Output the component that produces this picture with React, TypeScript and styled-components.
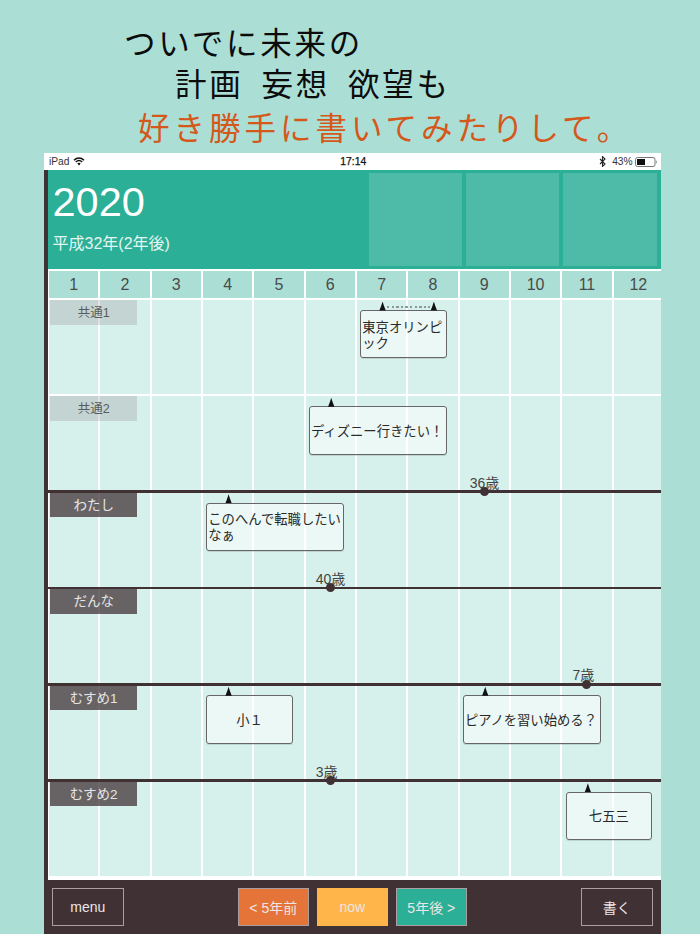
import React from "react";
import styled, { createGlobalStyle } from "styled-components";

const SANS = `"Liberation Sans", "Noto Sans CJK JP", sans-serif`;
const COL = 51.333;

const Global = createGlobalStyle`
  html, body { margin: 0; padding: 0; }
  body { background: #abdfd6; font-family: ${SANS}; width: 700px; height: 934px; overflow: hidden; }
  * { box-sizing: border-box; }
`;

const Page = styled.div`
  width: 700px;
  height: 934px;
  overflow: hidden;
  display: flex;
  flex-direction: column;
`;

const Hero = styled.div`
  height: 153px;
  padding-top: 21px;
  font-family: "Noto Sans CJK JP", sans-serif;
  font-size: 31.5px;
  letter-spacing: 2.8px;
  word-spacing: 8px;
`;

const HeroLine = styled.div<{ $indent: number; $accent?: boolean; $top?: number }>`
  height: 41px;
  line-height: 41px;
  padding-left: ${(p) => p.$indent}px;
  margin-top: ${(p) => p.$top ?? 0}px;
  color: ${(p) => (p.$accent ? "#d4581a" : "#0c0c0c")};
  letter-spacing: ${(p) => (p.$accent ? 4 : 2.8)}px;
  white-space: pre;
`;

const Device = styled.div`
  margin-left: 44px;
  width: 616.6px;
  flex: 1;
  display: flex;
  flex-direction: column;
  min-height: 0;
`;

const StatusBar = styled.div`
  height: 17px;
  background: #fff;
  display: grid;
  grid-template-columns: 1fr auto 1fr;
  align-items: center;
  padding: 0 3px 0 5px;
  font-size: 10.2px;
  color: #333;
`;

const StatusLeft = styled.div`
  display: flex;
  align-items: center;
  gap: 4px;
`;

const StatusTime = styled.div`
  color: #111;
  font-size: 10.4px;
  -webkit-text-stroke: 0.25px #111;
`;

const StatusRight = styled.div`
  display: flex;
  align-items: center;
  justify-content: flex-end;
  gap: 2px;
`;

const BluetoothSlot = styled.span`
  display: flex;
  margin-right: 4px;
`;

const Body = styled.div`
  flex: 1;
  min-height: 0;
  display: flex;
  flex-direction: column;
  border-left: 4px solid #403135;
  background: #fff;
  overflow: hidden;
`;

const YearHeader = styled.div`
  height: 99px;
  flex: none;
  background: #2baf96;
  display: flex;
  justify-content: space-between;
  padding: 3px 4px 3px 4.5px;
  margin-bottom: 2px;
`;

const YearInfo = styled.div`
  color: #fff;
  display: flex;
  flex-direction: column;
`;

const YearTitle = styled.div`
  font-size: 41.5px;
  line-height: 47px;
  margin-top: 5px;
`;

const YearSub = styled.div`
  font-size: 16px;
  line-height: 20px;
  margin-top: 9px;
  color: #e4f5f1;
`;

const PhotoSlots = styled.div`
  display: flex;
  gap: 4px;
`;

const PhotoSlot = styled.div`
  width: 93.2px;
  height: 93px;
  background: #4dbba7;
`;

const Board = styled.div`
  flex: none;
  width: 616px;
`;

const MonthGrid = styled.div`
  display: grid;
  grid-template-columns: repeat(12, ${COL}px);
  height: 27.5px;
`;

const Month = styled.div`
  background: #abdfd6;
  border-left: 1px solid #fff;
  border-right: 1px solid #fff;
  display: flex;
  align-items: center;
  justify-content: center;
  font-size: 16px;
  color: #4a4a4a;
`;

const Row = styled.div`
  position: relative;
  height: 96.333px;
  display: grid;
  grid-template-columns: repeat(12, ${COL}px);
  grid-template-rows: 96.333px;
`;

const RowLine = styled.div<{ $person?: boolean }>`
  position: absolute;
  left: 0;
  right: 0;
  top: ${(p) => (p.$person ? -0.8 : -1)}px;
  height: ${(p) => (p.$person ? 2.6 : 2)}px;
  background: ${(p) => (p.$person ? "#403135" : "#fff")};
`;

const Cell = styled.div<{ $col: number }>`
  grid-row: 1;
  grid-column: ${(p) => p.$col};
  background: #d6f1eb;
  border-left: 1px solid #fff;
  border-right: 1px solid #fff;
`;

const RowLabel = styled.div<{ $person?: boolean }>`
  grid-row: 1;
  grid-column: 1 / span 2;
  justify-self: start;
  align-self: start;
  position: relative;
  width: 86.7px;
  height: 24.7px;
  margin: 1.5px 0 0 2.3px;
  padding-bottom: 2px;
  display: flex;
  align-items: center;
  justify-content: center;
  font-size: ${(p) => (p.$person ? 13.5 : 12.5)}px;
  color: ${(p) => (p.$person ? "#e6e6e6" : "#5a5a5a")};
  background: ${(p) => (p.$person ? "rgba(64, 49, 53, 0.74)" : "rgba(120, 100, 110, 0.2)")};
`;

const Bubble = styled.div<{ $col: number; $span: number; $width: number; $center?: boolean }>`
  grid-row: 1;
  grid-column: ${(p) => p.$col} / span ${(p) => p.$span};
  justify-self: start;
  align-self: start;
  position: relative;
  width: ${(p) => p.$width}px;
  height: 48.3px;
  margin: 11.5px 0 0 4.3px;
  padding: 3px 1px 0;
  display: flex;
  align-items: center;
  justify-content: ${(p) => (p.$center ? "center" : "flex-start")};
  font-size: 13.33px;
  line-height: 16px;
  color: #2a2a2a;
  line-break: anywhere;
  background: rgba(255, 255, 255, 0.52);
  border: 1px solid #666;
  border-radius: 3px;
  box-shadow: 0 1px 0 rgba(0, 0, 0, 0.12);
`;

const Arrow = styled.span<{ $at: number }>`
  position: absolute;
  left: ${(p) => p.$at - 4}px;
  top: -9.5px;
  width: 8px;
  height: 9px;
  background: #111;
  clip-path: polygon(50% 0, 68% 50%, 90% 100%, 10% 100%, 32% 50%);
`;

const SpanDots = styled.span<{ $at: number; $width: number }>`
  position: absolute;
  left: ${(p) => p.$at}px;
  top: -5px;
  width: ${(p) => p.$width}px;
  height: 2px;
  background: repeating-linear-gradient(90deg, #8d9a98 0 2.4px, transparent 2.4px 4.6px);
`;

const AgeMark = styled.div<{ $col: number }>`
  grid-row: 1;
  grid-column: ${(p) => p.$col};
  justify-self: center;
  align-self: start;
  position: relative;
  width: 0;
  height: 0;
`;

const AgeDot = styled.span`
  position: absolute;
  left: -4.5px;
  top: -4px;
  width: 9px;
  height: 9px;
  border-radius: 50%;
  background: #403135;
`;

const AgeText = styled.span`
  position: absolute;
  left: -14.5px;
  top: -16.5px;
  font-size: 14px;
  line-height: 16px;
  color: #444;
  white-space: nowrap;
`;

const Spacer = styled.div`
  height: 4px;
  flex: none;
`;

const Footer = styled.div`
  margin-left: -4px;
  flex: 1;
  background: #403135;
  display: flex;
  align-items: flex-start;
  justify-content: space-between;
  padding: 8px 8px 0;
`;

const NavGroup = styled.div`
  display: flex;
  gap: 7.5px;
`;

const FootButton = styled.button<{ $bg?: string; $plain?: boolean }>`
  width: 71.5px;
  height: 38px;
  padding: 0;
  background: ${(p) => p.$bg ?? "transparent"};
  border: ${(p) => (p.$plain ? "0" : "1px solid #a99fa0")};
  border-radius: 0;
  color: #ebe6e6;
  font-family: ${SANS};
  font-size: 14px;
`;

const Wifi = () => (
  <svg width="12" height="9" viewBox="0 0 12 9" aria-hidden="true">
    <path d="M1 3.2C4 .4 8 .4 11 3.2" fill="none" stroke="#111" strokeWidth="1.5" />
    <path d="M2.8 5C4.7 3.3 7.3 3.3 9.2 5" fill="none" stroke="#111" strokeWidth="1.5" />
    <path d="M4.3 6.4C5.4 5.6 6.6 5.6 7.7 6.4L6 8.6Z" fill="#111" />
  </svg>
);

const Bluetooth = () => (
  <svg width="7" height="11" viewBox="0 0 7 11" aria-hidden="true">
    <path d="M1 3l5 5-2.5 2.4V.6L6 3 1 8" fill="none" stroke="#222" strokeWidth="1.1" />
  </svg>
);

const Battery = () => (
  <svg width="23" height="10" viewBox="0 0 23 10" aria-hidden="true">
    <rect x="0.5" y="0.5" width="19.5" height="9" rx="2" fill="none" stroke="#777" />
    <rect x="2" y="2" width="8" height="6" fill="#111" />
    <path d="M21 3.5c1 .3 1 2.7 0 3z" fill="#777" />
  </svg>
);

type Ev = {
  col: number;
  span: number;
  width: number;
  text: string;
  center?: boolean;
  arrows?: number[];
  dots?: boolean;
};

type RowData = {
  label: string;
  person?: boolean;
  age?: { col: number; text: string };
  events: Ev[];
};

const rows: RowData[] = [
  { label: "共通1", events: [{ col: 7, span: 2, width: 86.5, text: "東京オリンピック", arrows: [21.3, 72.6], dots: true }] },
  { label: "共通2", events: [{ col: 6, span: 3, width: 137.8, text: "ディズニー行きたい！" }] },
  { label: "わたし", person: true, age: { col: 9, text: "36歳" }, events: [{ col: 4, span: 3, width: 137.8, text: "このへんで転職したいなぁ" }] },
  { label: "だんな", person: true, age: { col: 6, text: "40歳" }, events: [] },
  {
    label: "むすめ1",
    person: true,
    age: { col: 11, text: "7歳" },
    events: [
      { col: 4, span: 2, width: 86.5, text: "小１", center: true },
      { col: 9, span: 3, width: 137.8, text: "ピアノを習い始める？" },
    ],
  },
  { label: "むすめ2", person: true, age: { col: 6, text: "3歳" }, events: [{ col: 11, span: 2, width: 86.5, text: "七五三", center: true }] },
];

const months = Array.from({ length: 12 }, (_, i) => i + 1);

export default function App() {
  return (
    <Page>
      <Global />
      <Hero>
        <HeroLine $indent={124}>ついでに未来の</HeroLine>
        <HeroLine $indent={175}>計画 妄想 欲望も</HeroLine>
        <HeroLine $indent={138} $accent $top={3}>好き勝手に書いてみたりして。</HeroLine>
      </Hero>
      <Device>
        <StatusBar>
          <StatusLeft>iPad <Wifi /></StatusLeft>
          <StatusTime>17:14</StatusTime>
          <StatusRight><BluetoothSlot><Bluetooth /></BluetoothSlot> 43% <Battery /></StatusRight>
        </StatusBar>
        <Body>
          <YearHeader>
            <YearInfo>
              <YearTitle>2020</YearTitle>
              <YearSub>平成32年(2年後)</YearSub>
            </YearInfo>
            <PhotoSlots>
              <PhotoSlot />
              <PhotoSlot />
              <PhotoSlot />
            </PhotoSlots>
          </YearHeader>
          <Board>
            <MonthGrid>
              {months.map((m) => <Month key={m}>{m}</Month>)}
            </MonthGrid>
            {rows.map((r) => (
              <Row key={r.label}>
                {months.map((m) => <Cell key={m} $col={m} />)}
                <RowLine $person={r.person} />
                <RowLabel $person={r.person}>{r.label}</RowLabel>
                {r.events.map((e) => (
                  <Bubble key={e.text} $col={e.col} $span={e.span} $width={e.width} $center={e.center}>
                    {(e.arrows ?? [21.3]).map((a) => <Arrow key={a} $at={a} />)}
                    {e.dots && <SpanDots $at={26} $width={43} />}
                    <span>{e.text}</span>
                  </Bubble>
                ))}
                {r.age && (
                  <AgeMark $col={r.age.col}>
                    <AgeText>{r.age.text}</AgeText>
                    <AgeDot />
                  </AgeMark>
                )}
              </Row>
            ))}
          </Board>
          <Spacer />
          <Footer>
            <FootButton>menu</FootButton>
            <NavGroup>
              <FootButton $bg="#e57438">&lt; 5年前</FootButton>
              <FootButton $bg="#ffb549" $plain>now</FootButton>
              <FootButton $bg="#2baf96">5年後 &gt;</FootButton>
            </NavGroup>
            <FootButton>書く</FootButton>
          </Footer>
        </Body>
      </Device>
    </Page>
  );
}
